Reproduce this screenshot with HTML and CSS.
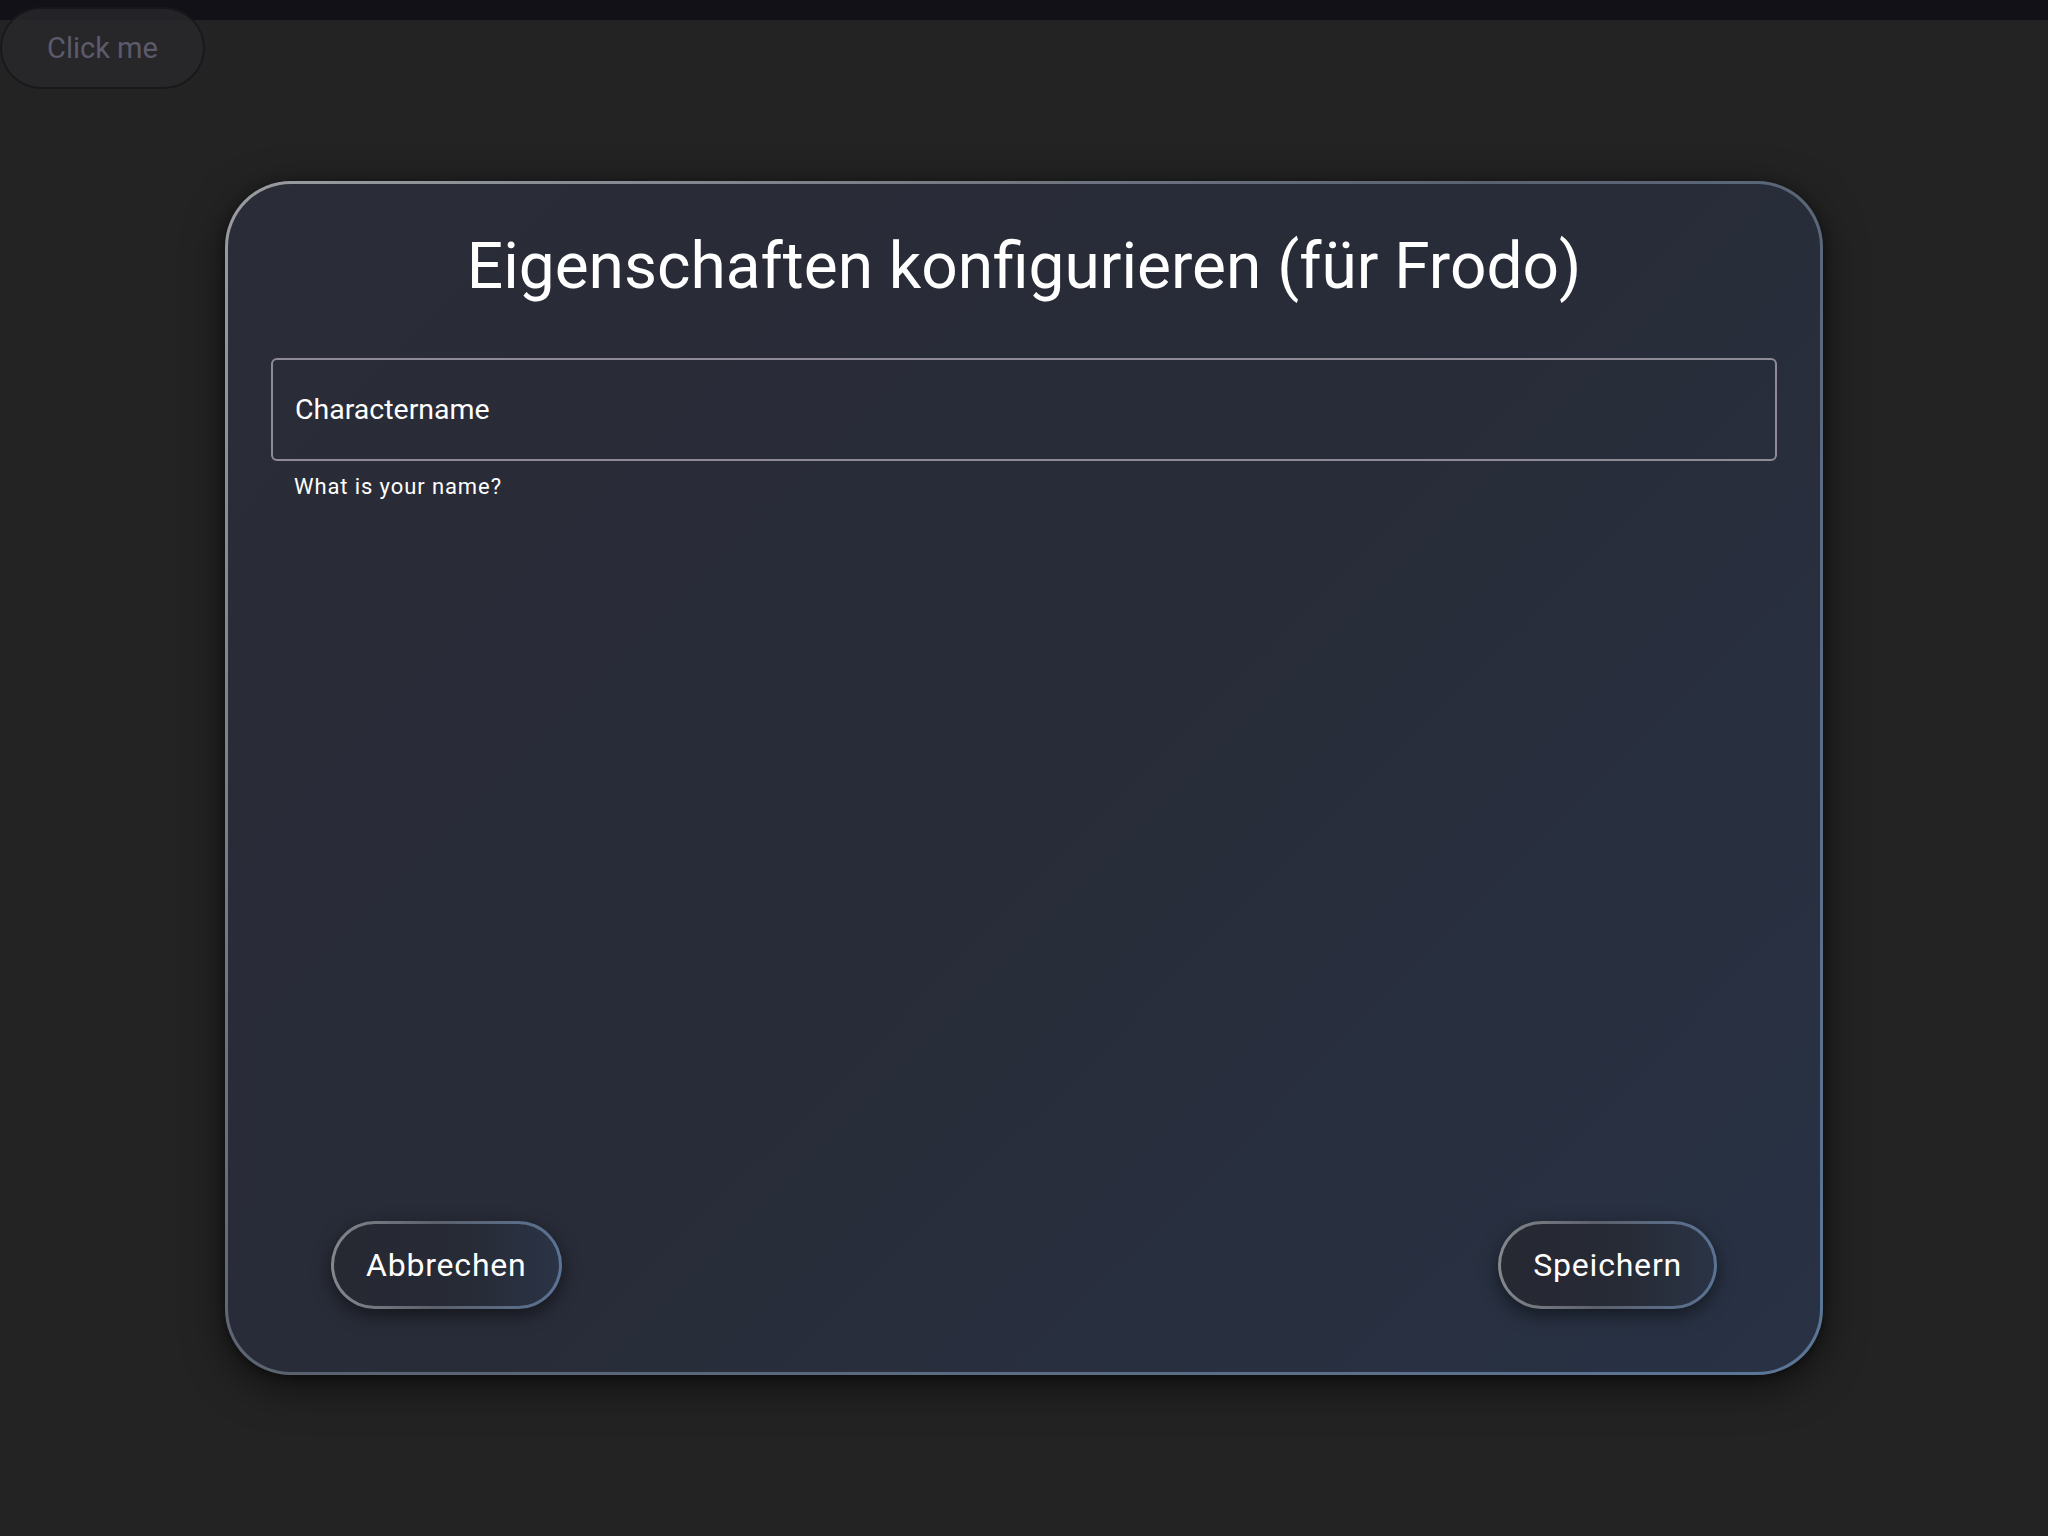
FILE: index.html
```html
<!DOCTYPE html>
<html lang="de">
<head>
<meta charset="utf-8">
<title>Eigenschaften konfigurieren</title>
<link rel="stylesheet" href="styles.css">
</head>
<body>
<div class="topbar"></div>
<button class="click-btn">Click me</button>
<main class="stage">
  <section class="dialog">
    <h1 class="dialog-title">Eigenschaften konfigurieren (für Frodo)</h1>
    <div class="field">
      <div class="field-box">
        <span class="field-label">Charactername</span>
      </div>
      <div class="field-help">What is your name?</div>
    </div>
    <div class="dialog-footer">
      <button class="pill-btn">Abbrechen</button>
      <button class="pill-btn">Speichern</button>
    </div>
  </section>
</main>
</body>
</html>
```
FILE: styles.css
```css
* { box-sizing: border-box; }

html, body {
  margin: 0;
  padding: 0;
}

body {
  background: #232323;
  font-family: Roboto, "Noto Sans", "Liberation Sans", sans-serif;
  color: #ffffff;
  width: 2048px;
  height: 1536px;
  overflow: hidden;
}

.topbar {
  height: 20px;
  background: #121118;
}

.click-btn {
  position: absolute;
  top: 7px;
  left: 0;
  width: 205px;
  height: 82px;
  border: 2px solid rgba(0, 0, 0, 0.35);
  border-radius: 41px;
  background: rgba(40, 40, 44, 0.85);
  color: #5d5a6b;
  font-family: Roboto, "Noto Sans", sans-serif;
  font-size: 29px;
  padding: 0;
  text-align: center;
}

.stage {
  height: 1516px;
  display: flex;
  align-items: center;
  justify-content: center;
}

.dialog {
  width: 1598px;
  height: 1194px;
  border: 3px solid transparent;
  border-radius: 66px;
  background:
    linear-gradient(135deg, #2a2c37 0%, #282c38 50%, #283245 100%) padding-box,
    linear-gradient(135deg, #9a9ca0 0%, #5a6270 45%, #5b7697 100%) border-box;
  box-shadow: 0 12px 40px rgba(0, 0, 0, 0.55), 0 2px 10px rgba(0, 0, 0, 0.4);
  display: flex;
  flex-direction: column;
  padding: 44px 43px 63px;
}

.dialog-title {
  margin: 0;
  font-size: 64px;
  font-weight: 400;
  line-height: 77px;
  text-align: center;
  color: #ffffff;
}

.field {
  margin-top: 53px;
}

.field-box {
  height: 103px;
  border: 2px solid #8e8a96;
  border-radius: 6px;
  display: flex;
  align-items: center;
  padding: 0 22px;
}

.field-label {
  font-size: 28.5px;
  font-weight: 400;
  color: #ffffff;
}

.field-help {
  margin-top: 13px;
  padding-left: 23px;
  font-size: 22px;
  font-weight: 400;
  letter-spacing: 0.9px;
  color: #ffffff;
}

.dialog-footer {
  margin-top: auto;
  display: flex;
  justify-content: space-between;
  padding: 0 60px;
}

.pill-btn {
  height: 88px;
  padding: 0 32px;
  border: 3px solid transparent;
  border-radius: 44px;
  background:
    linear-gradient(90deg, #262832 0%, #272b36 60%, #2a3446 100%) padding-box,
    linear-gradient(90deg, #84878c 0%, #5b606b 45%, #5a7395 100%) border-box;
  box-shadow: 0 6px 18px rgba(0, 0, 0, 0.5);
  color: #ffffff;
  font-family: Roboto, "Noto Sans", sans-serif;
  font-size: 32px;
  font-weight: 400;
  letter-spacing: 0.8px;
}
```
